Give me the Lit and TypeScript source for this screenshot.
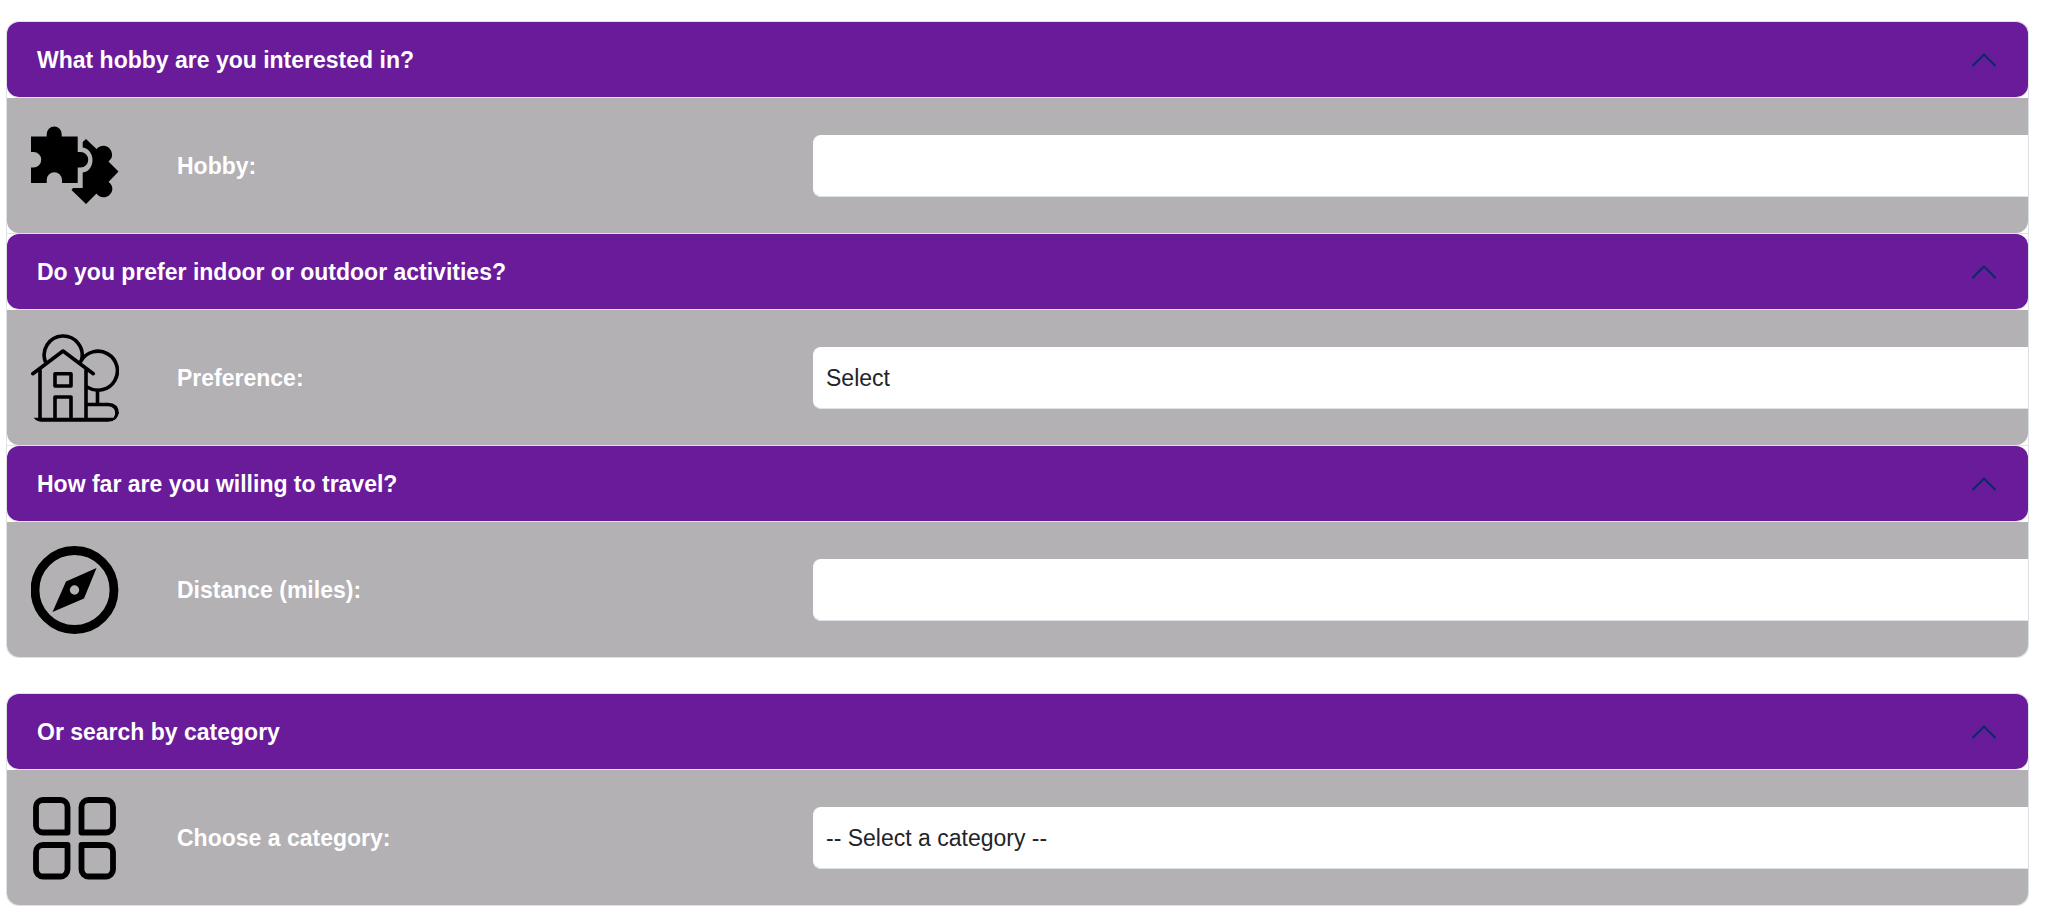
import { LitElement, html, css, svg } from "lit";
import { customElement, property, state } from "lit/decorators.js";

const icons = {
  puzzle: svg`
    <path transform="translate(0 4)" d="M0 10.500H15.700V8A7.500 7.500 0 0 1 30.700 8V10.500H46.700V26H49.500A7.500 7.500 0 0 1 49.500 41.500H46.700V57H31V54A7.500 7.500 0 0 0 15.700 54V57H0V41.500H2.500A7.500 7.500 0 0 0 2.500 26H0Z"/>
    <path transform="translate(0 4)" d="M51.700 21.500V16L55 13L65.500 23C72 16 82 21 81 30C81 32 79 34 77.500 35.500L87.500 45.500L77.500 56C86 62 79 73 71 71C69 71 67 69.500 65.500 67.500L55 78L40.500 64L42 62H51.700V46.500C58 46 61.500 40 61.500 34C61.500 28 58 22.500 51.700 21.500Z"/>`,
  house: svg`
    <g fill="none" stroke="currentColor" stroke-width="3.600" stroke-linecap="round" stroke-linejoin="round">
      <path d="M14.500 28A19 19 0 1 1 50.500 26M50 27A19.500 19.500 0 1 1 57 53.500M1.800 39.700L32 17L62.300 39.700M9 35V85M55 35V85M24 39.700H40V52H24ZM24 85V63H40V85M66.500 56V70M56 70.500H77Q86 71 86 79"/>
    </g>
    <path d="M2.700 83.800H82.500Q84.300 82 84.300 78H87.800Q87 87.700 77 87.700H10Q5 87.200 2.700 83.800Z"/>`,
  compass: svg`
    <circle cx="43.500" cy="44" r="39.500" fill="none" stroke="currentColor" stroke-width="8.800"/>
    <path fill-rule="evenodd" d="M65.500 22L53 52.500L21.500 66L35 35.500ZM43.500 39.300A4.700 4.700 0 1 0 43.500 48.700A4.700 4.700 0 1 0 43.500 39.300Z"/>`,
  grid: svg`
    <g fill="none" stroke="currentColor" stroke-width="5.800" stroke-linejoin="round">
      <path d="M36.500 38.500H12A7 7 0 0 1 5 31.500V13A7 7 0 0 1 12 6H29.500A7 7 0 0 1 36.500 13Z"/>
      <path d="M50.500 38.500V13A7 7 0 0 1 57.500 6H75A7 7 0 0 1 82 13V31.500A7 7 0 0 1 75 38.500Z"/>
      <path d="M36.500 51V75.500A7 7 0 0 1 29.500 82.500H12A7 7 0 0 1 5 75.500V58A7 7 0 0 1 12 51Z"/>
      <path d="M50.500 51H75A7 7 0 0 1 82 58V75.500A7 7 0 0 1 75 82.500H57.500A7 7 0 0 1 50.500 75.500Z"/>
    </g>`,
};

@customElement("accordion-item")
class AccordionItem extends LitElement {
  @property() heading = "";
  @property() label = "";
  @property() icon: keyof typeof icons = "puzzle";
  @property() placeholder = "";
  @property({ type: Boolean, attribute: "as-select" }) asSelect = false;
  @state() private open = true;

  static styles = css`
    :host { display: block; }
    h2 { margin: 0; }
    .toggle {
      display: flex;
      align-items: center;
      justify-content: space-between;
      width: 100%;
      min-height: 76px;
      padding: 0 30px;
      border: 0;
      border-bottom: 1px solid #dee2e6;
      border-radius: 12px;
      background: #6a1b9a;
      background-clip: padding-box;
      color: #fff;
      font: bold 23px/28px "Liberation Sans", Arial, sans-serif;
      text-align: left;
      cursor: pointer;
      box-sizing: border-box;
    }
    .chevron { width: 28px; height: 28px; color: #052c65; }
    .toggle[aria-expanded="false"] .chevron { transform: rotate(180deg); }
    .panel {
      display: grid;
      grid-template-columns: 88px 578px 100%;
      column-gap: 58px;
      align-items: center;
      min-height: 135px;
      padding-left: 24px;
      overflow: hidden;
      box-sizing: border-box;
      background: #b3b1b4;
      border-radius: 0 0 12px 12px;
    }
    .panel[hidden] { display: none; }
    .icon { width: 88px; height: 88px; color: #000; fill: currentColor; }
    label { color: #fff; font-weight: bold; }
    .field {
      width: 100%;
      height: 62px;
      padding: 0 12px;
      border: 1px solid #fff;
      border-bottom-color: #dee2e6;
      border-radius: 8px;
      box-sizing: border-box;
      background: #fff;
      color: #212529;
      font: 23px/36px "Liberation Sans", Arial, sans-serif;
      appearance: none;
    }
  `;

  render() {
    return html`
      <h2>
        <button class="toggle" aria-expanded=${this.open} aria-controls="panel" @click=${() => (this.open = !this.open)}>
          ${this.heading}
          <svg class="chevron" viewBox="0 0 28 28" fill="none" stroke="currentColor" stroke-width="2" stroke-linecap="round" stroke-linejoin="round" aria-hidden="true">
            <path d="M3 19.500L14 8.500L25 19.500"/>
          </svg>
        </button>
      </h2>
      <div class="panel" id="panel" ?hidden=${!this.open}>
        <svg class="icon" viewBox="0 0 88 88" aria-hidden="true">${icons[this.icon]}</svg>
        <label for="field">${this.label}</label>
        ${this.asSelect
          ? html`<select class="field" id="field"><option>${this.placeholder}</option></select>`
          : html`<input class="field" id="field" type="text">`}
      </div>
    `;
  }
}

@customElement("app-root")
class AppRoot extends LitElement {
  static styles = css`
    :host {
      display: flex;
      flex-direction: column;
      gap: 35px;
      padding: 21px 19px 8px 6px;
      background: #fff;
      font: 23px/36px "Liberation Sans", Arial, sans-serif;
    }
    .accordion {
      border: 1px solid #dee2e6;
      border-radius: 12px;
    }
    accordion-item + accordion-item {
      border-top: 1px solid #dee2e6;
    }
  `;

  render() {
    return html`
      <section class="accordion">
        <accordion-item heading="What hobby are you interested in?" label="Hobby:" icon="puzzle"></accordion-item>
        <accordion-item heading="Do you prefer indoor or outdoor activities?" label="Preference:" icon="house" as-select placeholder="Select"></accordion-item>
        <accordion-item heading="How far are you willing to travel?" label="Distance (miles):" icon="compass"></accordion-item>
      </section>
      <section class="accordion">
        <accordion-item heading="Or search by category" label="Choose a category:" icon="grid" as-select placeholder="-- Select a category --"></accordion-item>
      </section>
    `;
  }
}
